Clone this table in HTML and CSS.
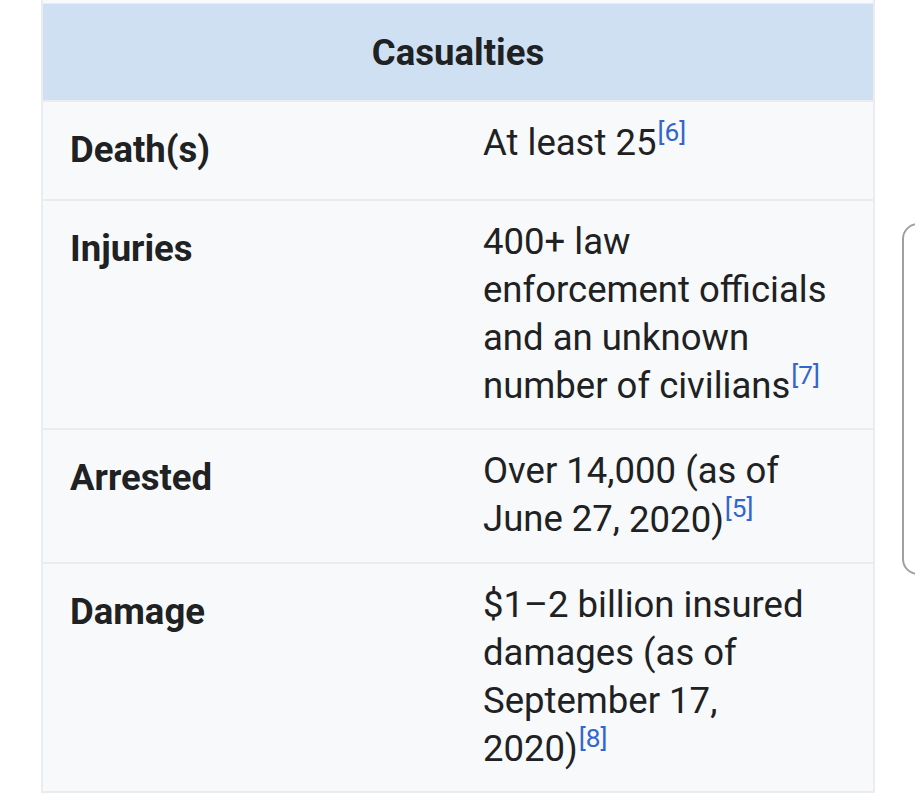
FILE: index.html
```
<!DOCTYPE html>
<html lang="en">
<head>
<meta charset="utf-8">
<title>Casualties</title>
<link rel="stylesheet" href="styles.css">
</head>
<body>
<div class="page">
  <div class="infobox">
    <div class="prev-row"></div>
    <div class="header">Casualties</div>
    <div class="row">
      <div class="label">Death(s)</div>
      <div class="value">At least <span class="nw">25<sup class="ref">[6]</sup></span></div>
    </div>
    <div class="row">
      <div class="label">Injuries</div>
      <div class="value">400+ law enforcement officials and an unknown number of <span class="nw">civilians<sup class="ref">[7]</sup></span></div>
    </div>
    <div class="row">
      <div class="label">Arrested</div>
      <div class="value">Over 14,000 (as of June 27, <span class="nw">2020)<sup class="ref">[5]</sup></span></div>
    </div>
    <div class="row last">
      <div class="label">Damage</div>
      <div class="value">$1–2 billion insured damages (as of September 17, <span class="nw">2020)<sup class="ref">[8]</sup></span></div>
    </div>
  </div>
  <div class="scroll-handle"></div>
</div>
</body>
</html>
```

FILE: styles.css
```
html, body {
  margin: 0;
  padding: 0;
  background: #ffffff;
}

body {
  font-family: Roboto, "Noto Sans", sans-serif;
  color: #202122;
  width: 915px;
  height: 800px;
  overflow: hidden;
}

.page {
  position: relative;
  width: 915px;
  height: 800px;
}

.infobox {
  margin-left: 41px;
  width: 830px;
  border-left: 2px solid #eaecf0;
  border-right: 2px solid #eaecf0;
  border-bottom: 2px solid #eaecf0;
  background: #f8f9fa;
}

.prev-row {
  height: 3px;
  background: #f8f9fa;
  border-bottom: 1px solid #eaecf0;
}

.header {
  height: 96px;
  background: #cee0f2;
  display: flex;
  align-items: center;
  justify-content: center;
  font-weight: 700;
  font-size: 36.5px;
  border-bottom: 2px solid #eaecf0;
}

.row {
  display: grid;
  grid-template-columns: 440px 1fr;
  border-bottom: 2px solid #eaecf0;
  font-size: 36.5px;
  line-height: 48px;
}

.row.last {
  border-bottom: none;
}

.label {
  font-weight: 700;
  padding: 24px 10px 25px 27px;
}

.value {
  padding: 17px 36px 18px 0;
}

.nw {
  white-space: nowrap;
}

.ref {
  color: #3366cc;
  font-size: 0.72em;
  line-height: 1;
  vertical-align: 0.55em;
  margin-left: 1px;
}

.scroll-handle {
  position: absolute;
  left: 902px;
  top: 223px;
  width: 30px;
  height: 348px;
  border: 2px solid #a0a0a0;
  border-radius: 16px;
  background: #ffffff;
}
```
